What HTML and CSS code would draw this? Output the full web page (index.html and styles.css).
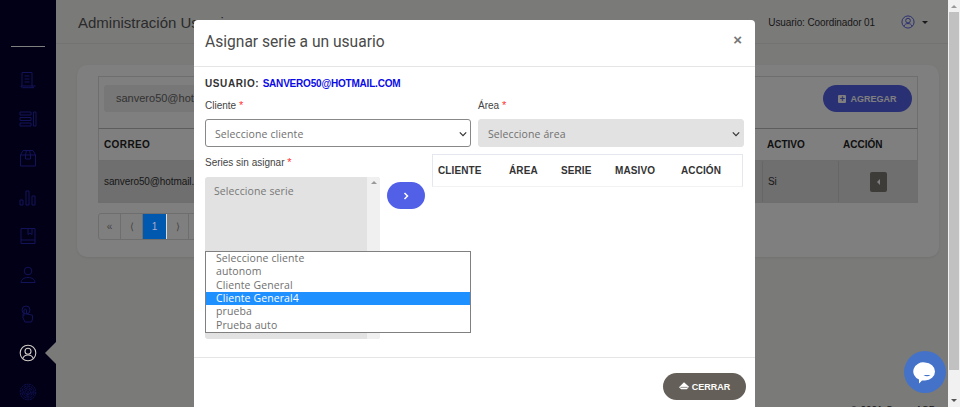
FILE: index.html
```html
<!DOCTYPE html>
<html lang="es">
<head>
  <meta charset="UTF-8">
  <title>Administración Usuarios</title>
  <link rel="stylesheet" href="styles.css">
</head>
<body>
  <div class="page">
    <nav class="sidebar">
      <div class="side-line"></div>
      <svg class="side-icon" viewBox="0 0 18 18"><path d="M3 15V1.500h10V15a1.800 1.800 0 0 0 1.800 1.700H3.500A1.700 1.700 0 0 1 2 15h11M13 15h3.500M5.500 5h5M5.500 8h5M5.500 11h5"/></svg>
      <svg class="side-icon" viewBox="0 0 18 18"><path d="M1 2h11v3H1zM1 7.500h11v3H1zM1 13h11v3H1zM14.500 2H17v14h-2.500z"/></svg>
      <svg class="side-icon" viewBox="0 0 18 18"><path d="M1.500 6h15v11h-15zM1.500 6 4 1.500h10L16.500 6M6.500 6l1-4.500h3l1 4.500v4h-5z"/></svg>
      <svg class="side-icon" viewBox="0 0 18 18"><path d="M1 12h3v5H1zM7 3h3v14H7zM13 8h3v9h-3z"/></svg>
      <svg class="side-icon" viewBox="0 0 18 18"><path d="M2 1.500h14v15H2zM2 13h14M9 1.500v6l2-1.500 2 1.500v-6"/></svg>
      <svg class="side-icon" viewBox="0 0 18 18"><circle cx="9" cy="5" r="3.800"/><path d="M2 16.500c0-3 3-5 7-5s7 2 7 5z"/></svg>
      <svg class="side-icon" viewBox="0 0 18 18"><circle cx="7" cy="5" r="4"/><path d="M6 17l-2-4V9.500l1 1V5a1.300 1.300 0 0 1 2.500 0v4l6 1.200V14l-1 3z"/></svg>
      <div class="side-active">
        <svg class="side-icon side-icon-on" viewBox="0 0 18 18"><circle cx="9" cy="9" r="7.800"/><circle cx="9" cy="7.200" r="3"/><path d="M3.800 14.500c.8-2.500 2.500-3.500 5.200-3.500s4.400 1 5.200 3.500"/></svg>
      </div>
      <svg class="side-icon side-print" viewBox="0 0 18 18"><circle cx="9" cy="9" r="7.800" stroke-dasharray="2 .7"/><circle cx="9" cy="9" r="6" stroke-dasharray="3 .8"/><circle cx="9" cy="9" r="4.200" stroke-dasharray="4 1"/><circle cx="9" cy="9" r="2.500" stroke-dasharray="3 1"/><path d="M9 8v4"/></svg>
    </nav>

    <div class="main">
      <header class="topbar">
        <h1 class="page-title">Administración Usuarios</h1>
        <div class="top-user">
          <span>Usuario: Coordinador 01</span>
          <svg class="top-avatar" viewBox="0 0 18 18"><circle cx="9" cy="9" r="7.800"/><circle cx="9" cy="7.200" r="3"/><path d="M3.800 14.500c.8-2.500 2.500-3.500 5.200-3.500s4.400 1 5.200 3.500"/></svg>
          <span class="caret"></span>
        </div>
      </header>

      <section class="card">
        <div class="filter-row">
          <div class="search-box">sanvero50@hotmail.com</div>
          <button class="btn-add"><span class="plus-box">+</span>AGREGAR</button>
        </div>
        <div class="user-table">
          <div class="user-head">
            <span class="col-mail">CORREO</span>
            <span class="col-active">ACTIVO</span>
            <span class="col-action">ACCIÓN</span>
          </div>
          <div class="user-row">
            <span class="col-mail">sanvero50@hotmail.com</span>
            <span class="col-active">Si</span>
            <span class="col-action"><span class="row-btn"></span></span>
          </div>
        </div>
        <div class="pager">
          <span class="pg">«</span>
          <span class="pg">⟨</span>
          <span class="pg pg-on">1</span>
          <span class="pg">⟩</span>
          <span class="pg">»</span>
        </div>
      </section>

      <footer class="page-foot">© 2021 Grupo ASD</footer>
    </div>
  </div>

  <div class="backdrop"></div>

  <div class="modal">
    <div class="modal-head">
      <h2>Asignar serie a un usuario</h2>
      <span class="close">×</span>
    </div>
    <div class="modal-body">
      <p class="user-line">USUARIO: <span>SANVERO50@HOTMAIL.COM</span></p>
      <div class="two-cols">
        <div>
          <label>Cliente <i>*</i></label>
          <div class="select">Seleccione cliente<svg viewBox="0 0 10 6"><path d="M1 1l4 4 4-4"/></svg></div>
        </div>
        <div>
          <label>Área <i>*</i></label>
          <div class="select select-off">Seleccione área<svg viewBox="0 0 10 6"><path d="M1 1l4 4 4-4"/></svg></div>
        </div>
      </div>
      <div class="series-row">
        <div class="series-col">
          <label>Series sin asignar <i>*</i></label>
          <div class="listbox">
            <div class="listbox-text">Seleccione serie</div>
            <div class="listbox-bar"><span class="arrow-up"></span></div>
          </div>
        </div>
        <button class="btn-move"><svg viewBox="0 0 8 10"><path d="M2 1l4 4-4 4"/></svg></button>
        <div class="series-table">
          <span>CLIENTE</span><span>ÁREA</span><span>SERIE</span><span>MASIVO</span><span>ACCIÓN</span>
        </div>
      </div>
    </div>
    <div class="modal-foot">
      <button class="btn-close">
        <svg viewBox="0 0 14 12"><path d="M7 0l7 6.500-3 3.500H3L0 7z"/><path class="eraser-cut" d="M2 7.200h10"/></svg>
        CERRAR
      </button>
    </div>

    <ul class="dropdown">
      <li>Seleccione cliente</li>
      <li>autonom</li>
      <li>Cliente General</li>
      <li class="dropdown-on">Cliente General4</li>
      <li>prueba</li>
      <li>Prueba auto</li>
    </ul>
  </div>

  <div class="scrollbar">
    <span class="arrow-up"></span>
    <div class="scroll-thumb"></div>
    <span class="arrow-down"></span>
  </div>

  <div class="chat">
    <svg viewBox="0 0 24 24"><path class="chat-bubble" d="M12 2.500a10 9 0 0 1 0 18H9l-3 3v-4A10 9 0 0 1 12 2.500z"/><path class="chat-smile" d="M10.500 15h7q-3.500 2.500-7 0z"/></svg>
  </div>
</body>
</html>
```

FILE: styles.css
```css
* {
  margin: 0;
  padding: 0;
  box-sizing: border-box;
}

html, body {
  width: 960px;
  height: 407px;
  overflow: hidden;
}

body {
  font-family: "Liberation Sans", Arial, sans-serif;
  background: #f5f5f3;
  color: #333;
}

button {
  border: none;
  font: inherit;
}

.page {
  display: flex;
  height: 407px;
  width: 948px;
}

/* sidebar */
.sidebar {
  width: 56px;
  flex: none;
  background: #02002f;
  display: flex;
  flex-direction: column;
  align-items: center;
  padding-top: 46px;
  gap: 21px;
  overflow: hidden;
}

.side-line {
  width: 34px;
  height: 1px;
  background: #fff;
  margin-bottom: 3px;
}

.side-icon {
  width: 18px;
  height: 18px;
  flex: none;
  fill: none;
  stroke: #2626b4;
  stroke-width: 1;
}

.side-icon-on {
  position: relative;
  z-index: 1;
  stroke: #d2cbc4;
  stroke-width: 1.1;
}

.side-print {
  stroke-width: .9;
}

.side-active {
  position: relative;
  display: flex;
}

.side-active::after {
  content: "";
  position: absolute;
  left: 26px;
  top: -2px;
  border: 11px solid transparent;
  border-left: none;
  border-right: 11px solid #f5f5f3;
}

/* main */
.main {
  flex: 1;
  display: flex;
  flex-direction: column;
  min-width: 0;
}

.topbar {
  height: 44px;
  display: flex;
  justify-content: space-between;
  align-items: center;
  padding: 1px 20px 0 22px;
  border-bottom: 1px solid #e6e6e6;
  flex: none;
}

.page-title {
  font-size: 15px;
  font-weight: 400;
  color: #555;
}

.top-user {
  display: flex;
  align-items: center;
  font-size: 10px;
  letter-spacing: -.1px;
  color: #333;
}

.top-avatar {
  width: 14px;
  height: 14px;
  margin: 0 7px 0 26px;
  fill: none;
  stroke: #4a55e0;
  stroke-width: 1.2;
}

.caret {
  border: 3px solid transparent;
  border-top: 3px solid #333;
  border-bottom: none;
}

.card {
  margin: 21px 9px 0 21px;
  height: 192px;
  flex: none;
  background: #fff;
  border-radius: 10px;
  padding: 11px 21px;
  box-shadow: 0 1px 3px rgba(0,0,0,.08);
}

.filter-row {
  height: 53px;
  border: 1px solid #ddd;
  border-bottom-color: #bbb;
  display: flex;
  justify-content: space-between;
  align-items: flex-start;
  padding: 8px 5px 0;
}

.search-box {
  width: 300px;
  height: 27px;
  background: #eee;
  border-radius: 3px;
  padding: 7px 12px;
  font-size: 11px;
  color: #666;
}

.btn-add {
  width: 89px;
  height: 27px;
  border-radius: 14px;
  background: #5260e8;
  color: #fff;
  font-size: 9px;
  font-weight: 700;
  display: flex;
  align-items: center;
  justify-content: center;
  gap: 4px;
}

.plus-box {
  width: 8px;
  height: 8px;
  background: #fff;
  color: #5260e8;
  font-size: 9px;
  line-height: 8px;
  text-align: center;
  border-radius: 1px;
}

.user-table {
  border: 1px solid #ddd;
  border-top: none;
}

.user-head,
.user-row {
  display: flex;
  align-items: center;
  font-size: 10px;
}

.user-head {
  height: 32px;
  font-weight: 700;
  color: #222;
  border-bottom: 1px solid #ddd;
}

.user-row {
  height: 41px;
  background: #dedede;
  letter-spacing: -.1px;
}

.col-mail {
  flex: 1;
  padding-left: 5px;
  white-space: nowrap;
}

.user-head .col-mail {
  letter-spacing: .4px;
}

.col-active {
  width: 76px;
  padding-left: 5px;
}

.col-action {
  width: 79px;
  padding-left: 5px;
  display: flex;
}

.user-row .col-active,
.user-row .col-action {
  border-left: 1px solid #ccc;
  height: 100%;
  display: flex;
  align-items: center;
}

.user-row .col-action {
  justify-content: center;
  padding-left: 0;
}

.row-btn {
  width: 17px;
  height: 20px;
  background: #7c7870;
  border-radius: 2px;
  display: flex;
  align-items: center;
  justify-content: center;
}

.row-btn::before {
  content: "";
  border: 3px solid transparent;
  border-left: none;
  border-right: 3px solid #fff;
}

.pager {
  display: flex;
  margin-top: 10px;
  width: max-content;
  border: 1px solid #ddd;
  border-radius: 3px;
  font-size: 10px;
  color: #888;
}

.pg {
  width: 22px;
  height: 25px;
  display: flex;
  align-items: center;
  justify-content: center;
  border-right: 1px solid #ddd;
}

.pg-on {
  position: relative;
  z-index: 1;
  width: 24px;
  background: #0059ae;
  color: #aac;
}

.page-foot {
  margin-top: auto;
  margin-bottom: -9px;
  padding-right: 12px;
  text-align: right;
  font-size: 10px;
  color: #333;
}

/* overlay */
.backdrop {
  position: absolute;
  left: 0;
  top: 0;
  width: 948px;
  height: 407px;
  background: rgba(0,0,0,.5);
}

.modal {
  position: absolute;
  left: 194px;
  top: 20px;
  width: 561px;
  height: 420px;
  background: #fff;
  border-radius: 4px;
}

.modal-head {
  height: 47px;
  border-bottom: 1px solid #e5e5e5;
  display: flex;
  justify-content: space-between;
  padding: 13px 13px 0 11px;
}

.modal-head h2 {
  font-family: Roboto, sans-serif;
  font-size: 15.6px;
  font-weight: 400;
  color: #4a4a4a;
}

.close {
  font-size: 15px;
  font-weight: 700;
  color: #777;
  line-height: 14px;
}

.modal-body {
  height: 291px;
  padding: 11px 11px 0;
  border-bottom: 1px solid #e5e5e5;
}

.user-line {
  font-size: 10px;
  font-weight: 700;
  letter-spacing: .6px;
  color: #333;
  margin-bottom: 10px;
}

.user-line span {
  letter-spacing: -.2px;
  color: #0a0ae6;
}

.two-cols {
  display: grid;
  grid-template-columns: 266px 266px;
  gap: 7px;
}

label {
  display: block;
  font-size: 10px;
  color: #444;
  height: 15px;
  margin-bottom: 5px;
}

label i {
  color: #f33;
  font-style: normal;
  font-size: 11px;
}

.select {
  height: 28px;
  border: 1px solid #888;
  border-radius: 3px;
  font-family: "Open Sans", sans-serif;
  font-size: 10.5px;
  letter-spacing: .1px;
  color: #707070;
  padding: 7px 9px;
  position: relative;
}

.select svg {
  position: absolute;
  right: 3px;
  top: 11px;
  width: 8px;
  height: 6px;
  fill: none;
  stroke: #333;
  stroke-width: 1.5;
}

.select-off {
  background: #e2e2e2;
  border-color: #e2e2e2;
}

.series-row {
  display: flex;
  margin-top: 7px;
}

.series-col {
  width: 175px;
  padding-top: 2px;
}

.series-col label {
  margin-bottom: 6px;
}

.listbox {
  height: 162px;
  background: #e2e2e2;
  border-radius: 3px;
  display: flex;
  overflow: hidden;
}

.listbox-text {
  flex: 1;
  font-family: "Open Sans", sans-serif;
  font-size: 10.5px;
  letter-spacing: .1px;
  color: #777;
  padding: 7px 9px;
}

.listbox-bar {
  width: 13px;
  background: #f0f0f0;
  display: flex;
  justify-content: center;
  padding-top: 4px;
}

.arrow-up {
  width: 0;
  height: 0;
  border: 3px solid transparent;
  border-top: none;
  border-bottom: 3px solid #999;
}

.arrow-down {
  width: 0;
  height: 0;
  border: 3px solid transparent;
  border-bottom: none;
  border-top: 3px solid #555;
}

.btn-move {
  width: 38px;
  height: 27px;
  border-radius: 14px;
  background: #5260e8;
  margin: 28px 7px 0;
  display: flex;
  align-items: center;
  justify-content: center;
  flex: none;
}

.btn-move svg {
  width: 6px;
  height: 8px;
  fill: none;
  stroke: #fff;
  stroke-width: 2;
}

.series-table {
  width: 311px;
  height: 33px;
  border: 1px solid #e4e8ee;
  border-bottom-color: #f2f2f2;
  display: grid;
  grid-template-columns: 71px 52px 54px 66px auto;
  align-items: center;
  padding-left: 5px;
  font-size: 10px;
  font-weight: 700;
  letter-spacing: .1px;
  color: #333;
}

.modal-foot {
  display: flex;
  justify-content: flex-end;
  padding: 15px 9px;
}

.btn-close {
  width: 83px;
  height: 27px;
  border-radius: 14px;
  background: #645f58;
  color: #fff;
  font-size: 9px;
  font-weight: 700;
  display: flex;
  align-items: center;
  justify-content: center;
  gap: 3px;
}

.btn-close svg {
  width: 10px;
  height: 9px;
  fill: #fff;
}

.eraser-cut {
  fill: none;
  stroke: #645f58;
  stroke-width: 1;
}

/* native select list, open */
.dropdown {
  position: absolute;
  left: 11px;
  top: 231px;
  width: 266px;
  height: 82px;
  background: #fff;
  border: 1px solid #808080;
  list-style: none;
  font-family: "Open Sans", sans-serif;
  font-size: 10.5px;
  letter-spacing: .1px;
  color: #707070;
}

.dropdown li {
  height: 13.33px;
  line-height: 13px;
  padding-left: 10px;
}

.dropdown-on {
  background: #1e90ff;
  color: #fff;
}

/* page scrollbar */
.scrollbar {
  position: absolute;
  left: 948px;
  top: 0;
  width: 12px;
  height: 407px;
  background: #f1f1f1;
  display: flex;
  flex-direction: column;
  align-items: center;
  justify-content: space-between;
  padding: 5px 0;
}

.scroll-thumb {
  position: absolute;
  top: 12px;
  left: 1px;
  width: 10px;
  height: 358px;
  background: #c1c1c1;
}

.chat {
  position: absolute;
  left: 904px;
  top: 351px;
  width: 42px;
  height: 42px;
  border-radius: 50%;
  background: #4472c9;
  display: flex;
  align-items: center;
  justify-content: center;
}

.chat svg {
  width: 24px;
  height: 24px;
}

.chat-bubble {
  fill: #fff;
}

.chat-smile {
  fill: #4472c9;
}
```
